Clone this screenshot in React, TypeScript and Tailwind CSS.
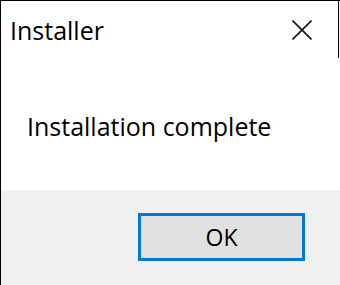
export default function App() {
  return (
    <div
      className="w-[340px] h-[285px] flex flex-col bg-white border-l border-t border-black overflow-hidden"
      style={{ fontFamily: '"Open Sans", "Noto Sans", sans-serif' }}
    >
      {/* Title bar */}
      <div className="h-[57px] mr-px border-r border-black flex items-start justify-between pl-[9px] pr-[26px] pt-[17px]">
        <span className="text-[25px] leading-[25px] text-black">Installer</span>
        <svg
          className="mt-[2px] w-5 h-5"
          viewBox="0 0 20 20"
          fill="none"
          stroke="#111"
          strokeWidth={1.6}
        >
          <path d="M0.5 0.5L19.5 19.5M19.5 0.5L0.5 19.5" />
        </svg>
      </div>

      {/* Message */}
      <div className="h-[132px] pl-[26px] pt-[56px]">
        <p className="text-[25px] leading-[25px] text-black">Installation complete</p>
      </div>

      {/* Footer */}
      <div className="flex-1 bg-[#f0f0f0] pl-[137px] pt-[23px]">
        <button className="w-[167px] h-[48px] bg-[#e1e1e1] border-[3px] border-[#0078d7] text-[23px] leading-none text-black flex items-center justify-center">
          OK
        </button>
      </div>
    </div>
  );
}
